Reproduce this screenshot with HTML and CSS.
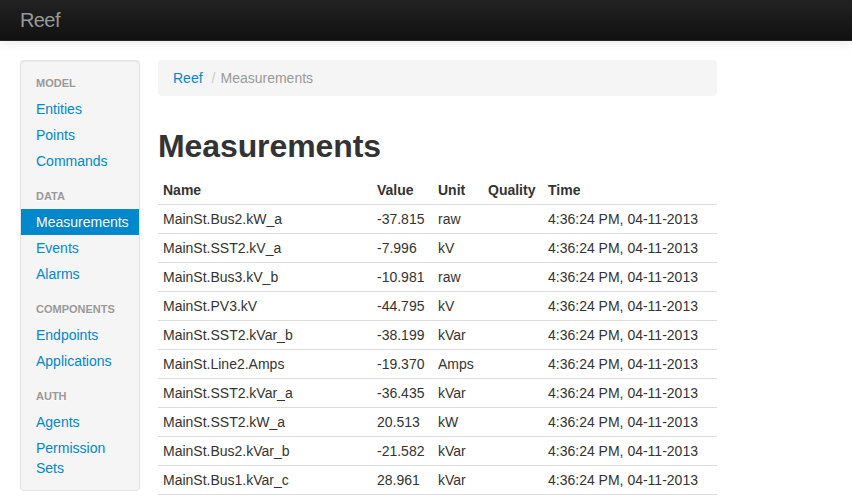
FILE: index.html
```html
<!DOCTYPE html>
<html>
<head>
<meta charset="utf-8">
<title>Reef</title>
<link rel="stylesheet" href="styles.css">
</head>
<body>
<div class="navbar">
  <a class="brand" href="#">Reef</a>
</div>
<div class="container">
  <div class="sidebar well">
    <ul class="nav-list">
      <li class="nav-header">Model</li>
      <li><a href="#">Entities</a></li>
      <li><a href="#">Points</a></li>
      <li><a href="#">Commands</a></li>
      <li class="nav-header">Data</li>
      <li class="active"><a href="#">Measurements</a></li>
      <li><a href="#">Events</a></li>
      <li><a href="#">Alarms</a></li>
      <li class="nav-header">Components</li>
      <li><a href="#">Endpoints</a></li>
      <li><a href="#">Applications</a></li>
      <li class="nav-header">Auth</li>
      <li><a href="#">Agents</a></li>
      <li><a href="#">Permission Sets</a></li>
    </ul>
  </div>
  <div class="content">
    <ul class="breadcrumb">
      <li><a href="#">Reef</a><span class="divider">/</span></li>
      <li class="current">Measurements</li>
    </ul>
    <h1>Measurements</h1>
    <table class="table">
      <thead>
        <tr><th class="c-name">Name</th><th class="c-value">Value</th><th class="c-unit">Unit</th><th class="c-quality">Quality</th><th class="c-time">Time</th></tr>
      </thead>
      <tbody>
        <tr><td>MainSt.Bus2.kW_a</td><td>-37.815</td><td>raw</td><td></td><td>4:36:24 PM, 04-11-2013</td></tr>
        <tr><td>MainSt.SST2.kV_a</td><td>-7.996</td><td>kV</td><td></td><td>4:36:24 PM, 04-11-2013</td></tr>
        <tr><td>MainSt.Bus3.kV_b</td><td>-10.981</td><td>raw</td><td></td><td>4:36:24 PM, 04-11-2013</td></tr>
        <tr><td>MainSt.PV3.kV</td><td>-44.795</td><td>kV</td><td></td><td>4:36:24 PM, 04-11-2013</td></tr>
        <tr><td>MainSt.SST2.kVar_b</td><td>-38.199</td><td>kVar</td><td></td><td>4:36:24 PM, 04-11-2013</td></tr>
        <tr><td>MainSt.Line2.Amps</td><td>-19.370</td><td>Amps</td><td></td><td>4:36:24 PM, 04-11-2013</td></tr>
        <tr><td>MainSt.SST2.kVar_a</td><td>-36.435</td><td>kVar</td><td></td><td>4:36:24 PM, 04-11-2013</td></tr>
        <tr><td>MainSt.SST2.kW_a</td><td>20.513</td><td>kW</td><td></td><td>4:36:24 PM, 04-11-2013</td></tr>
        <tr><td>MainSt.Bus2.kVar_b</td><td>-21.582</td><td>kVar</td><td></td><td>4:36:24 PM, 04-11-2013</td></tr>
        <tr><td>MainSt.Bus1.kVar_c</td><td>28.961</td><td>kVar</td><td></td><td>4:36:24 PM, 04-11-2013</td></tr>
        <tr class="last"><td></td><td></td><td></td><td></td><td></td></tr>
      </tbody>
    </table>
  </div>
</div>
</body>
</html>
```
FILE: styles.css
```css
* { box-sizing: border-box; }
html, body { margin: 0; padding: 0; }
body {
  font-family: "Liberation Sans", Arial, sans-serif;
  font-size: 14px;
  line-height: 20px;
  color: #333;
  background: #fff;
}
a { color: #0088cc; text-decoration: none; }

.navbar {
  height: 41px;
  background: linear-gradient(to bottom, #222 0%, #111 100%);
  border-bottom: 1px solid #252525;
  box-shadow: 0 1px 10px rgba(0,0,0,0.1);
  padding: 0 20px;
  display: flex;
  align-items: center;
}
.brand {
  color: #999;
  font-size: 20px;
  font-weight: 200;
  line-height: 20px;
  padding: 0 0 1px 0;
  letter-spacing: -0.6px;
}

.container {
  display: flex;
  align-items: flex-start;
  gap: 18px;
  padding: 19px 20px 0 20px;
}

.well {
  background: #f5f5f5;
  border: 1px solid #e3e3e3;
  border-radius: 4px;
  box-shadow: inset 0 1px 1px rgba(0,0,0,0.05);
}
.sidebar {
  width: 120px;
  flex: none;
  padding: 9px 0;
}
.nav-list {
  list-style: none;
  margin: 0;
  padding: 0;
}
.nav-list li a {
  display: block;
  padding: 3px 15px;
  line-height: 20px;
}
.nav-list .nav-header {
  padding: 3px 15px;
  font-size: 11px;
  font-weight: bold;
  line-height: 20px;
  color: #999;
  text-transform: uppercase;
  text-shadow: 0 1px 0 rgba(255,255,255,0.5);
}
.nav-list li + .nav-header { margin-top: 9px; }
.nav-list .active a {
  background: #0088cc;
  color: #fff;
  text-shadow: 0 -1px 0 rgba(0,0,0,0.2);
}

.content {
  width: 559px;
  flex: none;
}
.breadcrumb {
  list-style: none;
  margin: 0;
  padding: 8px 15px;
  background: #f5f5f5;
  border-radius: 4px;
  display: flex;
}
.breadcrumb .divider {
  color: #ccc;
  padding: 0 5px 0 9px;
}
.breadcrumb .current { color: #999; }

h1 {
  margin: 30px 0 10px 0;
  font-size: 32px;
  line-height: 40px;
  font-weight: bold;
  color: #333;
  letter-spacing: -0.1px;
}

.table {
  width: 559px;
  border-collapse: collapse;
  table-layout: fixed;
  border-spacing: 0;
}
.table th, .table td {
  padding: 4px 5px;
  line-height: 20px;
  text-align: left;
  vertical-align: top;
  border-top: 1px solid #ddd;
  white-space: nowrap;
}
.table thead th {
  border-top: 0;
  font-weight: bold;
}
.table .last td { height: 28px; }
.c-name { width: 214px; }
.c-value { width: 61px; }
.c-unit { width: 50px; }
.c-quality { width: 60px; }
.c-time { width: 174px; }
```
